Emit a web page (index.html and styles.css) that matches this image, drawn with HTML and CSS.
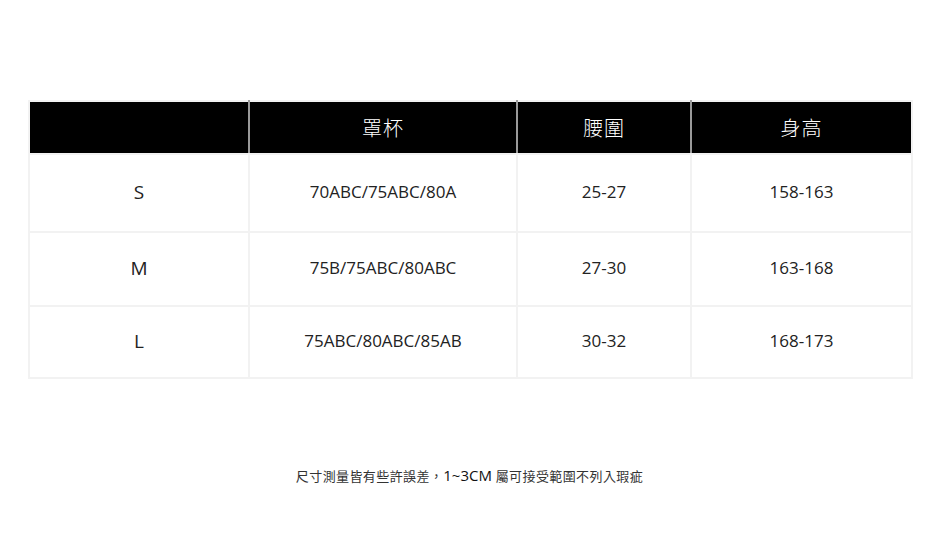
FILE: index.html
```html
<!DOCTYPE html>
<html lang="zh-Hant">
<head>
<meta charset="utf-8">
<title>尺寸表</title>
<link rel="stylesheet" href="styles.css">
</head>
<body>
<main class="page">
  <table class="size-table">
    <colgroup>
      <col class="c1"><col class="c2"><col class="c3"><col class="c4">
    </colgroup>
    <thead>
      <tr class="head-row">
        <th></th>
        <th>罩杯</th>
        <th>腰圍</th>
        <th>身高</th>
      </tr>
    </thead>
    <tbody>
      <tr class="r1">
        <td class="size">S</td>
        <td>70ABC/75ABC/80A</td>
        <td>25-27</td>
        <td>158-163</td>
      </tr>
      <tr class="r2">
        <td class="size">M</td>
        <td>75B/75ABC/80ABC</td>
        <td>27-30</td>
        <td>163-168</td>
      </tr>
      <tr class="r3">
        <td class="size">L</td>
        <td>75ABC/80ABC/85AB</td>
        <td>30-32</td>
        <td>168-173</td>
      </tr>
    </tbody>
  </table>
  <p class="note">尺寸測量皆有些許誤差，<span class="num">1~3CM</span> 屬可接受範圍不列入瑕疵</p>
</main>
</body>
</html>
```

FILE: styles.css
```css
html, body {
  margin: 0;
  padding: 0;
  background: #ffffff;
}

.page {
  padding: 100px 29px 0 28px;
  font-family: "Open Sans", "Noto Sans CJK TC", sans-serif;
  color: #222;
}

.size-table {
  width: 883px;
  border-collapse: collapse;
  table-layout: fixed;
  border: 2px solid #f2f2f2;
}

.c1 { width: 220px; }
.c2 { width: 268px; }
.c3 { width: 174px; }
.c4 { width: 221px; }

.head-row th {
  height: 51px;
  background: #000;
  color: #fff;
  font-family: "Noto Sans CJK TC", sans-serif;
  font-weight: 300;
  font-size: 20px;
  letter-spacing: 1px;
  text-align: center;
  vertical-align: middle;
  padding: 0;
  border: 2px solid #9a9a9a;
  border-bottom-color: #f2f2f2;
  border-top-width: 1px;
}

.head-row th:first-child {
  border-left-color: #f2f2f2;
}
.head-row th:last-child {
  border-right-color: #f2f2f2;
}

.size-table td {
  border: 2px solid #f2f2f2;
  text-align: center;
  vertical-align: middle;
  padding: 0 0 3px 0;
  font-size: 17px;
  color: #222;
}

.size-table td.size {
  font-size: 19px;
  color: #222;
}

.r1 td { height: 73px; }
.r2 td { height: 69px; }
.r3 td { height: 67px; }

.note {
  margin: 86px 0 0 0;
  text-align: center;
  font-family: "Open Sans", "Noto Sans CJK TC", sans-serif;
  font-size: 13px;
  letter-spacing: 0.4px;
  color: #333;
}

.note .num {
  font-size: 15px;
  color: #111;
  letter-spacing: 0;
}
```
